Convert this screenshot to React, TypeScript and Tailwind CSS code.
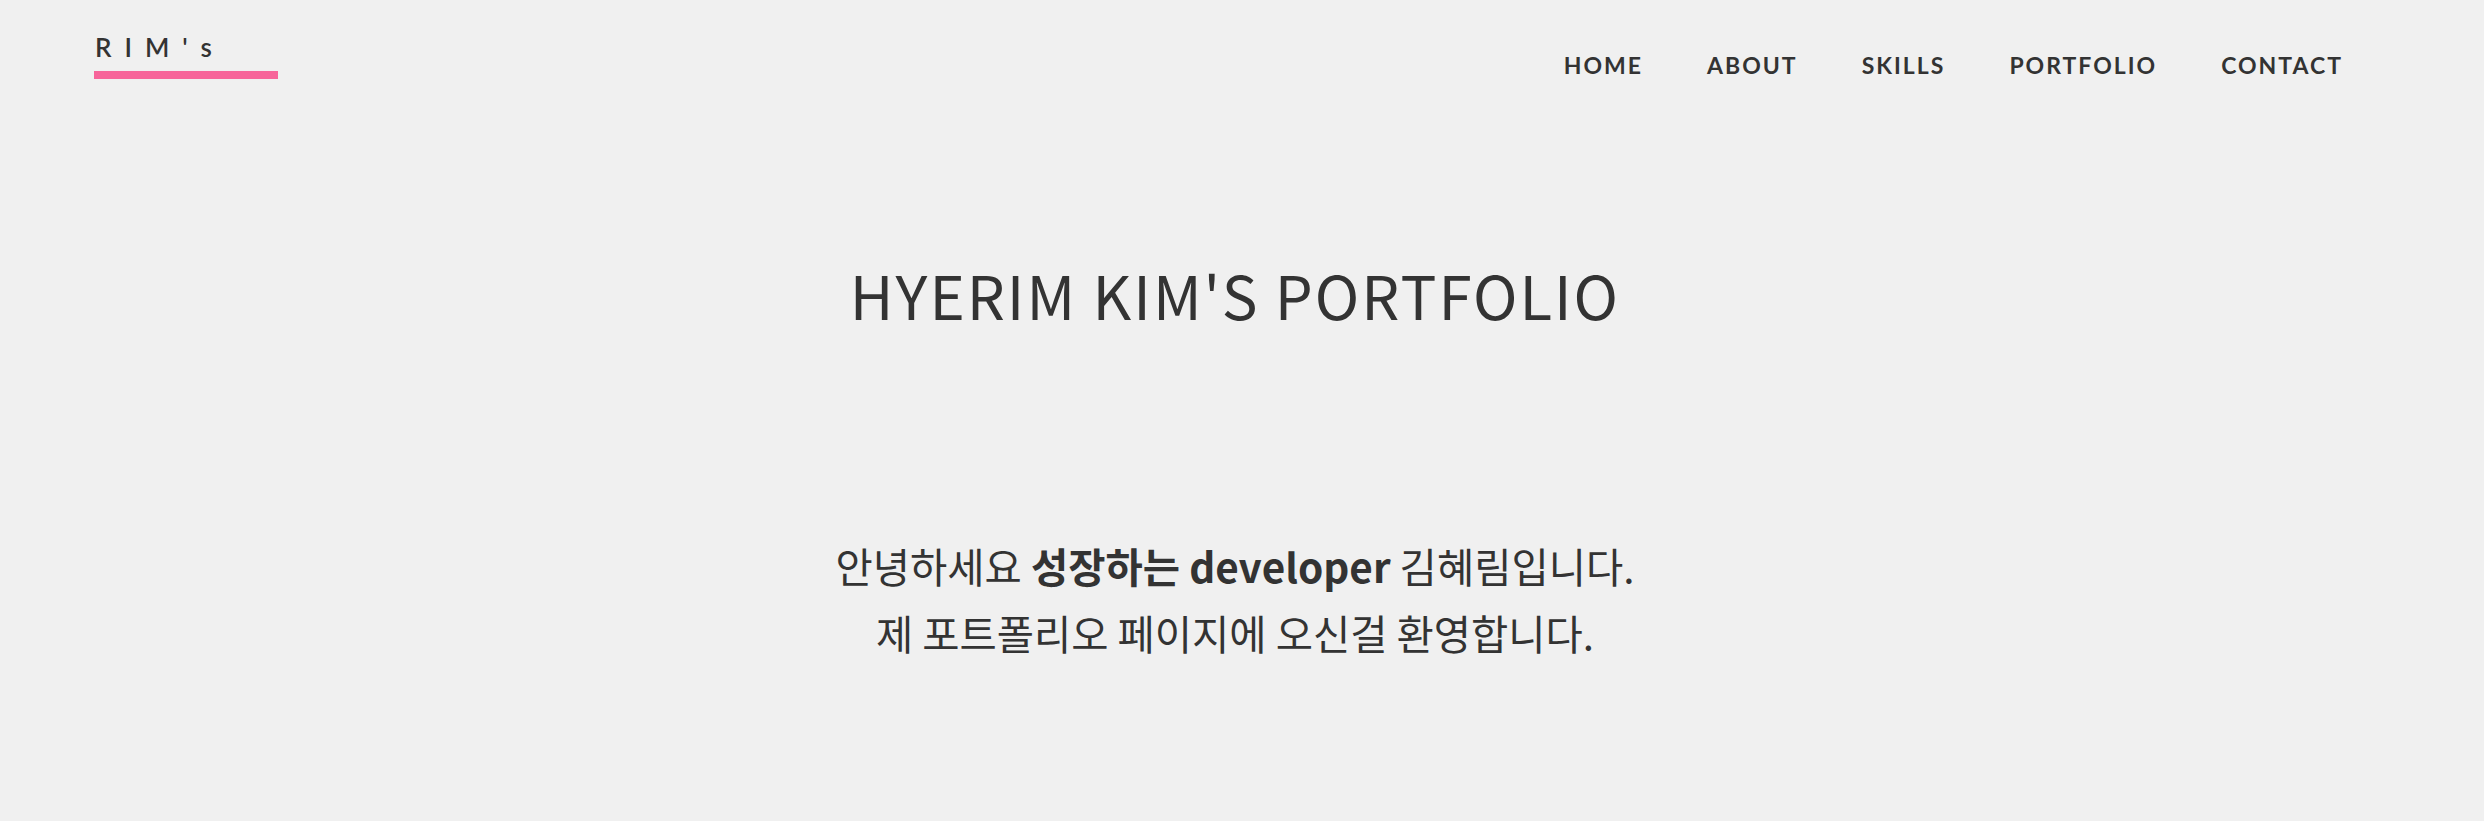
import React from 'react';

const navLinks = ['HOME', 'ABOUT', 'SKILLS', 'PORTFOLIO', 'CONTACT'];

export default function App() {
  return (
    <div className="min-h-[821px] w-full bg-[#f0f0f0] text-[#333333] font-['Lato','Noto_Sans_CJK_KR',sans-serif]">
      {/* Header */}
      <header className="flex items-start justify-between pl-[94px] pr-[141px] pt-[30px]">
        <div className="flex flex-col">
          <span className="text-[26px] leading-[34px] font-semibold tracking-[13px] pl-[1px]">RIM's</span>
          <span className="mt-[7px] block h-2 w-[184px] bg-[#f7659a]" />
        </div>
        <nav className="flex items-center gap-[64px] pt-[20px]">
          {navLinks.map((link) => (
            <a key={link} href="#" className="text-[23px] leading-[30px] font-bold tracking-[2px]">
              {link}
            </a>
          ))}
        </nav>
      </header>

      {/* Hero */}
      <main className="flex flex-col items-center pr-[14px]">
        <h1 className="mt-[178px] text-[60px] leading-[72px] font-normal tracking-[2px] font-['Noto_Sans_CJK_KR',sans-serif]">
          HYERIM KIM'S PORTFOLIO
        </h1>
        <div className="mt-[202px] text-center text-[40.5px] leading-[67px] font-['Noto_Sans_CJK_KR',sans-serif]">
          <p>
            안녕하세요 <strong className="font-bold">성장하는 developer</strong> 김혜림입니다.
          </p>
          <p>제 포트폴리오 페이지에 오신걸 환영합니다.</p>
        </div>
      </main>
    </div>
  );
}
